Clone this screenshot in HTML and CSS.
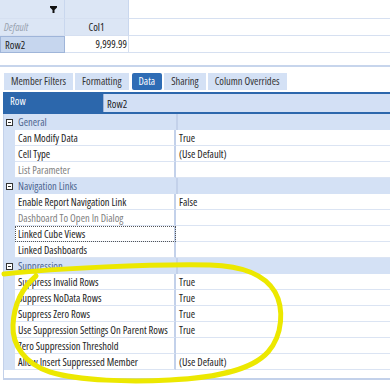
FILE: index.html
```html
<!DOCTYPE html>
<html lang="en">
<head>
  <meta charset="UTF-8" />
  <title>Cube View - Row Properties</title>
  <link rel="stylesheet" href="styles.css">
</head>
<body>

  <div class="sheet">
    <div class="cell head">
      <svg class="funnel" width="7" height="7" viewBox="0 0 7 7"><path d="M0 0H7V1.5L4.5 4V7H2.5V4L0 1.5Z" fill="#111"/></svg>
    </div>
    <div class="cell head"></div>
    <div class="cell blank"></div>

    <div class="cell head default">Default</div>
    <div class="cell head center">Col1</div>
    <div class="cell blank"></div>

    <div class="cell rowhead">Row2</div>
    <div class="cell num">9,999.99</div>
    <div class="cell blank"></div>
  </div>

  <div class="tabs">
    <div class="tab">Member Filters</div>
    <div class="tab">Formatting</div>
    <div class="tab active">Data</div>
    <div class="tab">Sharing</div>
    <div class="tab">Column Overrides</div>
  </div>

  <div class="rowbar">
    <div class="rowbar-label">Row</div>
    <div class="rowbar-value">Row2</div>
  </div>

  <div class="props">
    <div class="cat"><span class="toggle"></span>General</div>
    <div class="prop"><span class="name">Can Modify Data</span><span class="val">True</span></div>
    <div class="prop"><span class="name">Cell Type</span><span class="val">(Use Default)</span></div>
    <div class="prop off"><span class="name">List Parameter</span><span class="val"></span></div>

    <div class="cat"><span class="toggle"></span>Navigation Links</div>
    <div class="prop"><span class="name">Enable Report Navigation Link</span><span class="val">False</span></div>
    <div class="prop off"><span class="name">Dashboard To Open In Dialog</span><span class="val"></span></div>
    <div class="prop focus"><span class="name">Linked Cube Views</span><span class="val"></span></div>
    <div class="prop"><span class="name">Linked Dashboards</span><span class="val"></span></div>

    <div class="cat"><span class="toggle"></span>Suppression</div>
    <div class="prop"><span class="name">Suppress Invalid Rows</span><span class="val">True</span></div>
    <div class="prop"><span class="name">Suppress NoData Rows</span><span class="val">True</span></div>
    <div class="prop"><span class="name">Suppress Zero Rows</span><span class="val">True</span></div>
    <div class="prop"><span class="name">Use Suppression Settings On Parent Rows</span><span class="val">True</span></div>
    <div class="prop"><span class="name">Zero Suppression Threshold</span><span class="val"></span></div>
    <div class="prop"><span class="name">Allow Insert Suppressed Member</span><span class="val">(Use Default)</span></div>
    <div class="props-foot"></div>
  </div>

  <!-- highlighter loop drawn over the suppression section -->
  <svg class="marker" width="390" height="390" viewBox="0 0 390 390">
    <path d="M4 274 C60 268 150 264 210 265 C245 266 265 275 275 292 C284 308 283 335 268 352 C250 372 210 378 170 380 C130 382 80 381 50 372 C25 364 12 345 13 325 C14 305 22 288 36 276"
          fill="none" stroke="#ece800" stroke-width="5" stroke-linecap="round"/>
  </svg>

</body>
</html>
```

FILE: styles.css
```css
body {
  margin: 0;
  background: #fff;
  font-family: "Open Sans", sans-serif;
  font-size: 10.5px;
  font-stretch: 83%;
  color: #222;
  width: 390px;
  height: 390px;
  overflow: hidden;
  position: relative;
}

/* top data grid */
.sheet {
  display: grid;
  grid-template-columns: 65px 64px 1fr;
  grid-template-rows: 19px 17px 17px;
  height: 65px;
  border-bottom: 2px solid #c7d5ec;
}

.cell {
  display: flex;
  align-items: center;
  padding: 0 4px;
  border-bottom: 1px solid #d6e0f1;
  white-space: nowrap;
}

.head {
  background: #dce6f5;
  border-right: 1px solid #c9d7ee;
}

.funnel {
  margin-left: auto;
  margin-right: 3px;
}

.default {
  color: #9aa3b0;
  font-style: italic;
}

.center {
  justify-content: center;
}

.rowhead {
  background: #c6d6ee;
  border: 1px solid #9fb5d9;
}

.num {
  justify-content: flex-end;
  padding-right: 1px;
  border-right: 1px solid #d6e0f1;
}

/* tab strip */
.tabs {
  display: flex;
  gap: 2px;
  padding: 6px 0 0 4px;
  height: 17px;
  font-stretch: 76%;
}

.tab {
  background: #d4e1f5;
  padding: 0 7px;
  line-height: 17px;
  color: #333;
}

.tab.active {
  background: #2e6cb5;
  color: #fff;
  border-radius: 2px;
  margin-left: 1px;
}

/* row selector bar */
.rowbar {
  display: flex;
  margin: 2px 0 0 3px;
  height: 18px;
  border-top: 2px solid #2c67ac;
  border-bottom: 2px solid #2c67ac;
  background: #d3e0f5;
}

.rowbar-label {
  width: 93px;
  padding-left: 7px;
  background: #2c67ac;
  color: #fff;
  line-height: 14px;
}

.rowbar-value {
  padding: 2px 0 0 3px;
  line-height: 16px;
  border-left: 1px solid #9fb5d9;
}

/* property grid */
.props {
  margin-left: 3px;
  border-left: 1px solid #c3d1ea;
  background: #d4e1f5;
}

.cat {
  display: flex;
  align-items: center;
  height: 16px;
  color: #4d6690;
  background: linear-gradient(to right, transparent 172px, #c3d1ea 172px, #c3d1ea 174px, transparent 174px) #d4e1f5;
}

.toggle {
  width: 5px;
  height: 5px;
  border: 1px solid #333;
  margin: 0 5px 0 2px;
  background: linear-gradient(#333, #333) center / 3px 1px no-repeat #fff;
}

.prop {
  display: grid;
  grid-template-columns: 161px 1fr;
  margin-left: 11px;
  height: 16px;
}

.prop span {
  display: flex;
  align-items: center;
  background: #fff;
  border-bottom: 1px solid #dbe4f3;
  white-space: nowrap;
  overflow: hidden;
}

.name {
  padding-left: 3px;
  border-right: 2px solid #c3d1ea;
}

.val {
  padding-left: 3px;
}

.off .name {
  color: #808080;
}

.focus .name {
  outline: 1px dotted #555;
  outline-offset: -1px;
}

.props-foot {
  height: 8px;
  background: #fff;
  border-bottom: 2px solid #c3d1ea;
}

.marker {
  position: absolute;
  left: 0;
  top: 0;
  pointer-events: none;
}
```
